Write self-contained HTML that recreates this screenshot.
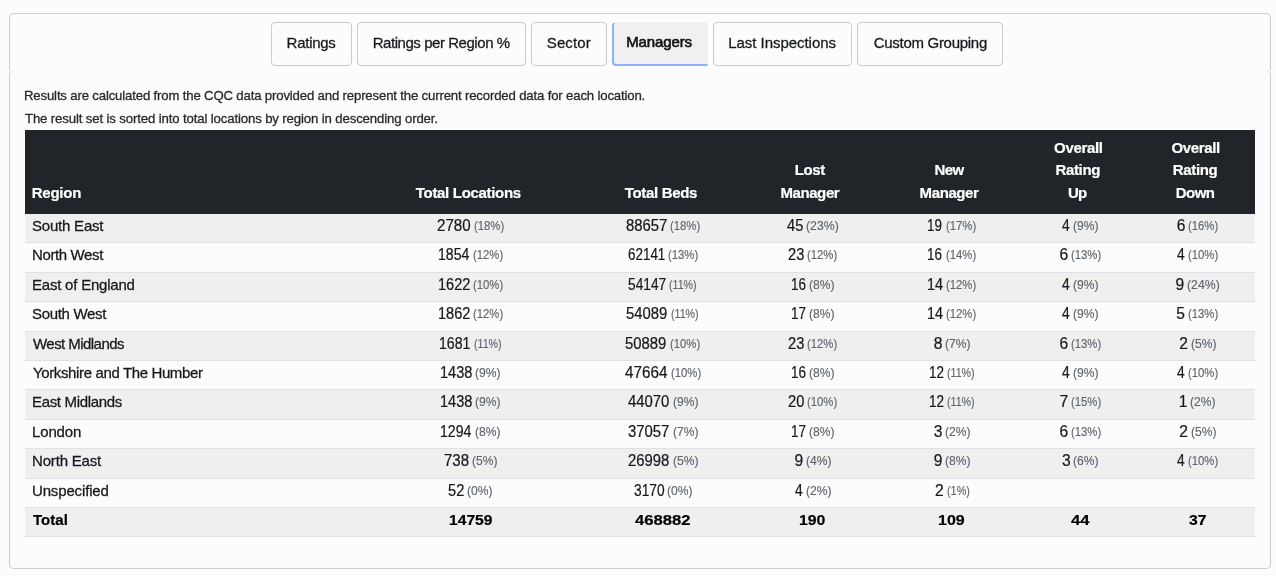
<!DOCTYPE html>
<html><head><meta charset="utf-8"><title>Managers</title>
<style>
html,body{margin:0;padding:0;}
body{width:1276px;height:576px;position:relative;overflow:hidden;background:#fcfcfc;font-family:"Liberation Sans",sans-serif;}
.t{position:absolute;white-space:nowrap;line-height:20px;transform-origin:0 0;}
.L{position:absolute;left:0;top:0;width:1276px;height:576px;will-change:transform;}
.b{font-weight:bold;}
.card{position:absolute;left:9px;top:13px;width:1260px;height:56px;border:1px solid #cbcbcb;border-bottom:0;border-radius:5px 5px 0 0;}
.pane{position:absolute;left:9px;top:70px;width:1260px;height:498px;background:#fcfcfc;border:1px solid #cbcbcb;border-top:0;border-radius:5px;}
.tab{position:absolute;top:22px;height:42px;border:1px solid #cbcbcb;border-radius:4px;background:#fcfcfc;box-sizing:content-box;}
.tab.on{background:#f0f0f0;border-color:transparent;border-radius:4px 4px 0 4px;border-left:2px solid #8cb4f5;border-bottom:2px solid #8cb4f5;height:41px;}
.hdr{position:absolute;left:25px;top:130px;width:1230px;height:84px;background:#212529;}
.row{position:absolute;left:25px;width:1230px;background:#efefef;}
.ln{position:absolute;left:25px;width:1230px;height:1px;background:#dee2e6;}
</style></head><body>
<div class="card"></div>
<div class="pane"></div>
<div class="tab" style="left:271px;width:79px;"></div>
<div class="tab" style="left:357px;width:167px;"></div>
<div class="tab" style="left:531px;width:74px;"></div>
<div class="tab on" style="left:612px;width:93px;"></div>
<div class="tab" style="left:713px;width:137px;"></div>
<div class="tab" style="left:857px;width:144px;"></div>
<div class="hdr"></div>
<div class="row" style="top:214px;height:28px"></div>
<div class="row" style="top:273px;height:28px"></div>
<div class="row" style="top:332px;height:28px"></div>
<div class="row" style="top:390px;height:29px"></div>
<div class="row" style="top:449px;height:29px"></div>
<div class="row" style="top:508px;height:28px"></div>
<div class="ln" style="top:242px"></div>
<div class="ln" style="top:272px"></div>
<div class="ln" style="top:301px"></div>
<div class="ln" style="top:331px"></div>
<div class="ln" style="top:360px"></div>
<div class="ln" style="top:389px"></div>
<div class="ln" style="top:419px"></div>
<div class="ln" style="top:448px"></div>
<div class="ln" style="top:478px"></div>
<div class="ln" style="top:507px"></div>
<div class="ln" style="top:536px"></div>
<div class="L">
<div class="t" style="left:286.60px;top:32.80px;font-size:15.0px;color:#16191c;letter-spacing:-0.267px;-webkit-text-stroke:0.28px #16191c;">Ratings</div>
<div class="t" style="left:372.70px;top:32.80px;font-size:15.0px;color:#16191c;letter-spacing:-0.447px;-webkit-text-stroke:0.28px #16191c;">Ratings per Region %</div>
<div class="t" style="left:546.80px;top:32.80px;font-size:15.0px;color:#16191c;letter-spacing:0.100px;-webkit-text-stroke:0.28px #16191c;">Sector</div>
<div class="t" style="left:626.20px;top:31.80px;font-size:15.0px;color:#111;letter-spacing:-0.114px;-webkit-text-stroke:0.6px #111;">Managers</div>
<div class="t" style="left:728.20px;top:32.80px;font-size:15.0px;color:#16191c;letter-spacing:-0.040px;-webkit-text-stroke:0.28px #16191c;">Last Inspections</div>
<div class="t" style="left:873.70px;top:32.80px;font-size:15.0px;color:#16191c;letter-spacing:-0.286px;-webkit-text-stroke:0.28px #16191c;">Custom Grouping</div>
<div class="t" style="left:24.00px;top:86.13px;font-size:13.2px;color:#282828;letter-spacing:-0.168px;-webkit-text-stroke:0.28px #282828;">Results are calculated from the CQC data provided and represent the current recorded data for each location.</div>
<div class="t" style="left:25.00px;top:109.13px;font-size:13.2px;color:#282828;letter-spacing:-0.133px;-webkit-text-stroke:0.28px #282828;">The result set is sorted into total locations by region in descending order.</div>
<div class="t b" style="left:31.70px;top:182.80px;font-size:15.0px;color:#fff;letter-spacing:-0.220px;-webkit-text-stroke:0.2px #fff;">Region</div>
<div class="t b" style="left:415.80px;top:182.80px;font-size:15.0px;color:#fff;letter-spacing:-0.314px;-webkit-text-stroke:0.2px #fff;">Total Locations</div>
<div class="t b" style="left:624.80px;top:182.80px;font-size:15.0px;color:#fff;letter-spacing:-0.333px;-webkit-text-stroke:0.2px #fff;">Total Beds</div>
<div class="t b" style="left:794.82px;top:159.80px;font-size:15.0px;color:#fff;letter-spacing:-0.413px;-webkit-text-stroke:0.2px #fff;">Lost</div>
<div class="t b" style="left:780.42px;top:182.80px;font-size:15.0px;color:#fff;letter-spacing:-0.407px;-webkit-text-stroke:0.2px #fff;">Manager</div>
<div class="t b" style="left:934.50px;top:159.80px;font-size:15.0px;color:#fff;letter-spacing:-0.600px;-webkit-text-stroke:0.2px #fff;">New</div>
<div class="t b" style="left:919.62px;top:182.80px;font-size:15.0px;color:#fff;letter-spacing:-0.407px;-webkit-text-stroke:0.2px #fff;">Manager</div>
<div class="t b" style="left:1054.10px;top:137.80px;font-size:15.0px;color:#fff;letter-spacing:-0.333px;-webkit-text-stroke:0.2px #fff;">Overall</div>
<div class="t b" style="left:1055.50px;top:159.80px;font-size:15.0px;color:#fff;letter-spacing:-0.360px;-webkit-text-stroke:0.2px #fff;">Rating</div>
<div class="t b" style="left:1067.98px;top:182.80px;font-size:15.0px;color:#fff;letter-spacing:-0.760px;-webkit-text-stroke:0.2px #fff;">Up</div>
<div class="t b" style="left:1171.40px;top:137.80px;font-size:15.0px;color:#fff;letter-spacing:-0.333px;-webkit-text-stroke:0.2px #fff;">Overall</div>
<div class="t b" style="left:1172.80px;top:159.80px;font-size:15.0px;color:#fff;letter-spacing:-0.360px;-webkit-text-stroke:0.2px #fff;">Rating</div>
<div class="t b" style="left:1175.68px;top:182.80px;font-size:15.0px;color:#fff;letter-spacing:-0.520px;-webkit-text-stroke:0.2px #fff;">Down</div>
<div class="t" style="left:32.00px;top:215.80px;font-size:15.0px;color:#16191c;letter-spacing:-0.211px;-webkit-text-stroke:0.28px #16191c;">South East</div>
<div class="t" style="left:32.00px;top:244.80px;font-size:15.0px;color:#16191c;letter-spacing:-0.378px;-webkit-text-stroke:0.28px #16191c;">North West</div>
<div class="t" style="left:32.00px;top:274.80px;font-size:15.0px;color:#16191c;letter-spacing:-0.214px;-webkit-text-stroke:0.28px #16191c;">East of England</div>
<div class="t" style="left:32.00px;top:303.80px;font-size:15.0px;color:#16191c;letter-spacing:-0.322px;-webkit-text-stroke:0.28px #16191c;">South West</div>
<div class="t" style="left:33.00px;top:333.80px;font-size:15.0px;color:#16191c;letter-spacing:-0.550px;-webkit-text-stroke:0.28px #16191c;">West Midlands</div>
<div class="t" style="left:33.00px;top:362.80px;font-size:15.0px;color:#16191c;letter-spacing:-0.370px;-webkit-text-stroke:0.28px #16191c;">Yorkshire and The Humber</div>
<div class="t" style="left:32.00px;top:391.80px;font-size:15.0px;color:#16191c;letter-spacing:-0.333px;-webkit-text-stroke:0.28px #16191c;">East Midlands</div>
<div class="t" style="left:32.00px;top:421.80px;font-size:15.0px;color:#16191c;letter-spacing:-0.140px;-webkit-text-stroke:0.28px #16191c;">London</div>
<div class="t" style="left:32.00px;top:450.80px;font-size:15.0px;color:#16191c;letter-spacing:-0.178px;-webkit-text-stroke:0.28px #16191c;">North East</div>
<div class="t" style="left:32.00px;top:480.80px;font-size:15.0px;color:#16191c;letter-spacing:-0.150px;-webkit-text-stroke:0.28px #16191c;">Unspecified</div>
<div class="t b" style="left:33.00px;top:509.80px;font-size:15.0px;color:#000;letter-spacing:0.050px;-webkit-text-stroke:0.2px #000;">Total</div>
<div class="t b" style="left:448.71px;top:509.80px;font-size:15.0px;color:#000;transform:scaleX(1.0425);-webkit-text-stroke:0.2px #000;">14759</div>
<div class="t b" style="left:635.05px;top:509.80px;font-size:15.0px;color:#000;transform:scaleX(1.1100);-webkit-text-stroke:0.2px #000;">468882</div>
<div class="t b" style="left:799.00px;top:509.80px;font-size:15.0px;color:#000;transform:scaleX(1.0542);-webkit-text-stroke:0.2px #000;">190</div>
<div class="t b" style="left:938.03px;top:509.80px;font-size:15.0px;color:#000;transform:scaleX(1.0667);-webkit-text-stroke:0.2px #000;">109</div>
<div class="t b" style="left:1070.65px;top:509.80px;font-size:15.0px;color:#000;transform:scaleX(1.1118);-webkit-text-stroke:0.2px #000;">44</div>
<div class="t b" style="left:1189.00px;top:509.80px;font-size:15.0px;color:#000;transform:scaleX(1.0500);-webkit-text-stroke:0.2px #000;">37</div>
<div class="t" style="left:437.38px;top:216.09px;font-size:15.6px;color:#16191c;transform:scaleX(0.9706);-webkit-text-stroke:0.22px #16191c;">2780</div>
<div class="t" style="left:473.82px;top:216.43px;font-size:13.2px;color:#5f656b;transform:scaleX(0.8574);-webkit-text-stroke:0.15px #5f656b;">(18%)</div>
<div class="t" style="left:625.57px;top:216.09px;font-size:15.6px;color:#16191c;transform:scaleX(0.9535);-webkit-text-stroke:0.22px #16191c;">88657</div>
<div class="t" style="left:670.02px;top:216.43px;font-size:13.2px;color:#5f656b;transform:scaleX(0.8574);-webkit-text-stroke:0.15px #5f656b;">(18%)</div>
<div class="t" style="left:786.73px;top:216.09px;font-size:15.6px;color:#16191c;transform:scaleX(0.9412);-webkit-text-stroke:0.22px #16191c;">45</div>
<div class="t" style="left:806.09px;top:216.43px;font-size:13.2px;color:#5f656b;transform:scaleX(0.9309);-webkit-text-stroke:0.15px #5f656b;">(23%)</div>
<div class="t" style="left:927.41px;top:216.09px;font-size:15.6px;color:#16191c;transform:scaleX(0.8625);-webkit-text-stroke:0.22px #16191c;">19</div>
<div class="t" style="left:945.52px;top:216.43px;font-size:13.2px;color:#5f656b;transform:scaleX(0.8574);-webkit-text-stroke:0.15px #5f656b;">(17%)</div>
<div class="t" style="left:1062.02px;top:216.09px;font-size:15.6px;color:#16191c;transform:scaleX(0.8889);-webkit-text-stroke:0.22px #16191c;">4</div>
<div class="t" style="left:1073.41px;top:216.43px;font-size:13.2px;color:#5f656b;transform:scaleX(0.9173);-webkit-text-stroke:0.15px #5f656b;">(9%)</div>
<div class="t" style="left:1176.68px;top:216.09px;font-size:15.6px;color:#16191c;-webkit-text-stroke:0.22px #16191c;">6</div>
<div class="t" style="left:1188.12px;top:216.43px;font-size:13.2px;color:#5f656b;transform:scaleX(0.8574);-webkit-text-stroke:0.15px #5f656b;">(16%)</div>
<div class="t" style="left:437.57px;top:245.09px;font-size:15.6px;color:#16191c;transform:scaleX(0.9059);-webkit-text-stroke:0.22px #16191c;">1854</div>
<div class="t" style="left:472.72px;top:245.43px;font-size:13.2px;color:#5f656b;transform:scaleX(0.8574);-webkit-text-stroke:0.15px #5f656b;">(12%)</div>
<div class="t" style="left:627.57px;top:245.09px;font-size:15.6px;color:#16191c;transform:scaleX(0.8605);-webkit-text-stroke:0.22px #16191c;">62141</div>
<div class="t" style="left:668.02px;top:245.43px;font-size:13.2px;color:#5f656b;transform:scaleX(0.8574);-webkit-text-stroke:0.15px #5f656b;">(13%)</div>
<div class="t" style="left:787.98px;top:245.09px;font-size:15.6px;color:#16191c;transform:scaleX(0.9412);-webkit-text-stroke:0.22px #16191c;">23</div>
<div class="t" style="left:807.42px;top:245.43px;font-size:13.2px;color:#5f656b;transform:scaleX(0.8574);-webkit-text-stroke:0.15px #5f656b;">(12%)</div>
<div class="t" style="left:927.41px;top:245.09px;font-size:15.6px;color:#16191c;transform:scaleX(0.8625);-webkit-text-stroke:0.22px #16191c;">16</div>
<div class="t" style="left:945.52px;top:245.43px;font-size:13.2px;color:#5f656b;transform:scaleX(0.8574);-webkit-text-stroke:0.15px #5f656b;">(14%)</div>
<div class="t" style="left:1059.38px;top:245.09px;font-size:15.6px;color:#16191c;-webkit-text-stroke:0.22px #16191c;">6</div>
<div class="t" style="left:1070.82px;top:245.43px;font-size:13.2px;color:#5f656b;transform:scaleX(0.8574);-webkit-text-stroke:0.15px #5f656b;">(13%)</div>
<div class="t" style="left:1176.68px;top:245.09px;font-size:15.6px;color:#16191c;transform:scaleX(0.8889);-webkit-text-stroke:0.22px #16191c;">4</div>
<div class="t" style="left:1188.12px;top:245.43px;font-size:13.2px;color:#5f656b;transform:scaleX(0.8574);-webkit-text-stroke:0.15px #5f656b;">(10%)</div>
<div class="t" style="left:437.54px;top:275.09px;font-size:15.6px;color:#16191c;transform:scaleX(0.9333);-webkit-text-stroke:0.22px #16191c;">1622</div>
<div class="t" style="left:472.72px;top:275.43px;font-size:13.2px;color:#5f656b;transform:scaleX(0.8574);-webkit-text-stroke:0.15px #5f656b;">(10%)</div>
<div class="t" style="left:627.94px;top:275.09px;font-size:15.6px;color:#16191c;transform:scaleX(0.8810);-webkit-text-stroke:0.22px #16191c;">54147</div>
<div class="t" style="left:669.32px;top:275.43px;font-size:13.2px;color:#5f656b;transform:scaleX(0.8076);-webkit-text-stroke:0.15px #5f656b;">(11%)</div>
<div class="t" style="left:790.86px;top:275.09px;font-size:15.6px;color:#16191c;transform:scaleX(0.8625);-webkit-text-stroke:0.22px #16191c;">16</div>
<div class="t" style="left:808.91px;top:275.43px;font-size:13.2px;color:#5f656b;transform:scaleX(0.9173);-webkit-text-stroke:0.15px #5f656b;">(8%)</div>
<div class="t" style="left:926.85px;top:275.09px;font-size:15.6px;color:#16191c;transform:scaleX(0.9250);-webkit-text-stroke:0.22px #16191c;">14</div>
<div class="t" style="left:946.02px;top:275.43px;font-size:13.2px;color:#5f656b;transform:scaleX(0.8574);-webkit-text-stroke:0.15px #5f656b;">(12%)</div>
<div class="t" style="left:1062.02px;top:275.09px;font-size:15.6px;color:#16191c;transform:scaleX(0.8889);-webkit-text-stroke:0.22px #16191c;">4</div>
<div class="t" style="left:1073.41px;top:275.43px;font-size:13.2px;color:#5f656b;transform:scaleX(0.9173);-webkit-text-stroke:0.15px #5f656b;">(9%)</div>
<div class="t" style="left:1175.43px;top:275.09px;font-size:15.6px;color:#16191c;-webkit-text-stroke:0.22px #16191c;">9</div>
<div class="t" style="left:1186.79px;top:275.43px;font-size:13.2px;color:#5f656b;transform:scaleX(0.9309);-webkit-text-stroke:0.15px #5f656b;">(24%)</div>
<div class="t" style="left:437.54px;top:304.09px;font-size:15.6px;color:#16191c;transform:scaleX(0.9333);-webkit-text-stroke:0.22px #16191c;">1862</div>
<div class="t" style="left:472.72px;top:304.43px;font-size:13.2px;color:#5f656b;transform:scaleX(0.8574);-webkit-text-stroke:0.15px #5f656b;">(12%)</div>
<div class="t" style="left:626.37px;top:304.09px;font-size:15.6px;color:#16191c;transform:scaleX(0.9524);-webkit-text-stroke:0.22px #16191c;">54089</div>
<div class="t" style="left:670.82px;top:304.43px;font-size:13.2px;color:#5f656b;transform:scaleX(0.8076);-webkit-text-stroke:0.15px #5f656b;">(11%)</div>
<div class="t" style="left:790.86px;top:304.09px;font-size:15.6px;color:#16191c;transform:scaleX(0.8625);-webkit-text-stroke:0.22px #16191c;">17</div>
<div class="t" style="left:808.91px;top:304.43px;font-size:13.2px;color:#5f656b;transform:scaleX(0.9173);-webkit-text-stroke:0.15px #5f656b;">(8%)</div>
<div class="t" style="left:926.85px;top:304.09px;font-size:15.6px;color:#16191c;transform:scaleX(0.9250);-webkit-text-stroke:0.22px #16191c;">14</div>
<div class="t" style="left:946.02px;top:304.43px;font-size:13.2px;color:#5f656b;transform:scaleX(0.8574);-webkit-text-stroke:0.15px #5f656b;">(12%)</div>
<div class="t" style="left:1062.02px;top:304.09px;font-size:15.6px;color:#16191c;transform:scaleX(0.8889);-webkit-text-stroke:0.22px #16191c;">4</div>
<div class="t" style="left:1073.41px;top:304.43px;font-size:13.2px;color:#5f656b;transform:scaleX(0.9173);-webkit-text-stroke:0.15px #5f656b;">(9%)</div>
<div class="t" style="left:1176.18px;top:304.09px;font-size:15.6px;color:#16191c;-webkit-text-stroke:0.22px #16191c;">5</div>
<div class="t" style="left:1187.62px;top:304.43px;font-size:13.2px;color:#5f656b;transform:scaleX(0.8574);-webkit-text-stroke:0.15px #5f656b;">(13%)</div>
<div class="t" style="left:439.32px;top:334.09px;font-size:15.6px;color:#16191c;transform:scaleX(0.9030);-webkit-text-stroke:0.22px #16191c;">1681</div>
<div class="t" style="left:473.52px;top:334.43px;font-size:13.2px;color:#5f656b;transform:scaleX(0.8076);-webkit-text-stroke:0.15px #5f656b;">(11%)</div>
<div class="t" style="left:625.12px;top:334.09px;font-size:15.6px;color:#16191c;transform:scaleX(0.9524);-webkit-text-stroke:0.22px #16191c;">50889</div>
<div class="t" style="left:669.52px;top:334.43px;font-size:13.2px;color:#5f656b;transform:scaleX(0.8574);-webkit-text-stroke:0.15px #5f656b;">(10%)</div>
<div class="t" style="left:787.98px;top:334.09px;font-size:15.6px;color:#16191c;transform:scaleX(0.9412);-webkit-text-stroke:0.22px #16191c;">23</div>
<div class="t" style="left:807.42px;top:334.43px;font-size:13.2px;color:#5f656b;transform:scaleX(0.8574);-webkit-text-stroke:0.15px #5f656b;">(12%)</div>
<div class="t" style="left:933.82px;top:334.09px;font-size:15.6px;color:#16191c;-webkit-text-stroke:0.22px #16191c;">8</div>
<div class="t" style="left:945.21px;top:334.43px;font-size:13.2px;color:#5f656b;transform:scaleX(0.9173);-webkit-text-stroke:0.15px #5f656b;">(7%)</div>
<div class="t" style="left:1059.38px;top:334.09px;font-size:15.6px;color:#16191c;-webkit-text-stroke:0.22px #16191c;">6</div>
<div class="t" style="left:1070.82px;top:334.43px;font-size:13.2px;color:#5f656b;transform:scaleX(0.8574);-webkit-text-stroke:0.15px #5f656b;">(13%)</div>
<div class="t" style="left:1179.33px;top:334.09px;font-size:15.6px;color:#16191c;-webkit-text-stroke:0.22px #16191c;">2</div>
<div class="t" style="left:1190.71px;top:334.43px;font-size:13.2px;color:#5f656b;transform:scaleX(0.9173);-webkit-text-stroke:0.15px #5f656b;">(5%)</div>
<div class="t" style="left:440.19px;top:363.09px;font-size:15.6px;color:#16191c;transform:scaleX(0.9333);-webkit-text-stroke:0.22px #16191c;">1438</div>
<div class="t" style="left:475.31px;top:363.43px;font-size:13.2px;color:#5f656b;transform:scaleX(0.9173);-webkit-text-stroke:0.15px #5f656b;">(9%)</div>
<div class="t" style="left:625.07px;top:363.09px;font-size:15.6px;color:#16191c;transform:scaleX(0.9767);-webkit-text-stroke:0.22px #16191c;">47664</div>
<div class="t" style="left:670.52px;top:363.43px;font-size:13.2px;color:#5f656b;transform:scaleX(0.8574);-webkit-text-stroke:0.15px #5f656b;">(10%)</div>
<div class="t" style="left:790.86px;top:363.09px;font-size:15.6px;color:#16191c;transform:scaleX(0.8625);-webkit-text-stroke:0.22px #16191c;">16</div>
<div class="t" style="left:808.91px;top:363.43px;font-size:13.2px;color:#5f656b;transform:scaleX(0.9173);-webkit-text-stroke:0.15px #5f656b;">(8%)</div>
<div class="t" style="left:928.66px;top:363.09px;font-size:15.6px;color:#16191c;transform:scaleX(0.8625);-webkit-text-stroke:0.22px #16191c;">12</div>
<div class="t" style="left:946.82px;top:363.43px;font-size:13.2px;color:#5f656b;transform:scaleX(0.8076);-webkit-text-stroke:0.15px #5f656b;">(11%)</div>
<div class="t" style="left:1062.02px;top:363.09px;font-size:15.6px;color:#16191c;transform:scaleX(0.8889);-webkit-text-stroke:0.22px #16191c;">4</div>
<div class="t" style="left:1073.41px;top:363.43px;font-size:13.2px;color:#5f656b;transform:scaleX(0.9173);-webkit-text-stroke:0.15px #5f656b;">(9%)</div>
<div class="t" style="left:1176.68px;top:363.09px;font-size:15.6px;color:#16191c;transform:scaleX(0.8889);-webkit-text-stroke:0.22px #16191c;">4</div>
<div class="t" style="left:1188.12px;top:363.43px;font-size:13.2px;color:#5f656b;transform:scaleX(0.8574);-webkit-text-stroke:0.15px #5f656b;">(10%)</div>
<div class="t" style="left:440.19px;top:392.09px;font-size:15.6px;color:#16191c;transform:scaleX(0.9333);-webkit-text-stroke:0.22px #16191c;">1438</div>
<div class="t" style="left:475.31px;top:392.43px;font-size:13.2px;color:#5f656b;transform:scaleX(0.9173);-webkit-text-stroke:0.15px #5f656b;">(9%)</div>
<div class="t" style="left:628.22px;top:392.09px;font-size:15.6px;color:#16191c;transform:scaleX(0.9535);-webkit-text-stroke:0.22px #16191c;">44070</div>
<div class="t" style="left:672.61px;top:392.43px;font-size:13.2px;color:#5f656b;transform:scaleX(0.9173);-webkit-text-stroke:0.15px #5f656b;">(9%)</div>
<div class="t" style="left:787.98px;top:392.09px;font-size:15.6px;color:#16191c;transform:scaleX(0.9412);-webkit-text-stroke:0.22px #16191c;">20</div>
<div class="t" style="left:807.42px;top:392.43px;font-size:13.2px;color:#5f656b;transform:scaleX(0.8574);-webkit-text-stroke:0.15px #5f656b;">(10%)</div>
<div class="t" style="left:928.66px;top:392.09px;font-size:15.6px;color:#16191c;transform:scaleX(0.8625);-webkit-text-stroke:0.22px #16191c;">12</div>
<div class="t" style="left:946.82px;top:392.43px;font-size:13.2px;color:#5f656b;transform:scaleX(0.8076);-webkit-text-stroke:0.15px #5f656b;">(11%)</div>
<div class="t" style="left:1059.38px;top:392.09px;font-size:15.6px;color:#16191c;-webkit-text-stroke:0.22px #16191c;">7</div>
<div class="t" style="left:1070.82px;top:392.43px;font-size:13.2px;color:#5f656b;transform:scaleX(0.8574);-webkit-text-stroke:0.15px #5f656b;">(15%)</div>
<div class="t" style="left:1178.83px;top:392.09px;font-size:15.6px;color:#16191c;-webkit-text-stroke:0.22px #16191c;">1</div>
<div class="t" style="left:1190.21px;top:392.43px;font-size:13.2px;color:#5f656b;transform:scaleX(0.9173);-webkit-text-stroke:0.15px #5f656b;">(2%)</div>
<div class="t" style="left:440.22px;top:422.09px;font-size:15.6px;color:#16191c;transform:scaleX(0.9059);-webkit-text-stroke:0.22px #16191c;">1294</div>
<div class="t" style="left:475.31px;top:422.43px;font-size:13.2px;color:#5f656b;transform:scaleX(0.9173);-webkit-text-stroke:0.15px #5f656b;">(8%)</div>
<div class="t" style="left:628.22px;top:422.09px;font-size:15.6px;color:#16191c;transform:scaleX(0.9535);-webkit-text-stroke:0.22px #16191c;">37057</div>
<div class="t" style="left:672.61px;top:422.43px;font-size:13.2px;color:#5f656b;transform:scaleX(0.9173);-webkit-text-stroke:0.15px #5f656b;">(7%)</div>
<div class="t" style="left:790.86px;top:422.09px;font-size:15.6px;color:#16191c;transform:scaleX(0.8625);-webkit-text-stroke:0.22px #16191c;">17</div>
<div class="t" style="left:808.91px;top:422.43px;font-size:13.2px;color:#5f656b;transform:scaleX(0.9173);-webkit-text-stroke:0.15px #5f656b;">(8%)</div>
<div class="t" style="left:933.82px;top:422.09px;font-size:15.6px;color:#16191c;-webkit-text-stroke:0.22px #16191c;">3</div>
<div class="t" style="left:945.21px;top:422.43px;font-size:13.2px;color:#5f656b;transform:scaleX(0.9173);-webkit-text-stroke:0.15px #5f656b;">(2%)</div>
<div class="t" style="left:1059.38px;top:422.09px;font-size:15.6px;color:#16191c;-webkit-text-stroke:0.22px #16191c;">6</div>
<div class="t" style="left:1070.82px;top:422.43px;font-size:13.2px;color:#5f656b;transform:scaleX(0.8574);-webkit-text-stroke:0.15px #5f656b;">(13%)</div>
<div class="t" style="left:1179.33px;top:422.09px;font-size:15.6px;color:#16191c;-webkit-text-stroke:0.22px #16191c;">2</div>
<div class="t" style="left:1190.71px;top:422.43px;font-size:13.2px;color:#5f656b;transform:scaleX(0.9173);-webkit-text-stroke:0.15px #5f656b;">(5%)</div>
<div class="t" style="left:444.03px;top:451.09px;font-size:15.6px;color:#16191c;transform:scaleX(0.9615);-webkit-text-stroke:0.22px #16191c;">738</div>
<div class="t" style="left:472.41px;top:451.43px;font-size:13.2px;color:#5f656b;transform:scaleX(0.9173);-webkit-text-stroke:0.15px #5f656b;">(5%)</div>
<div class="t" style="left:628.22px;top:451.09px;font-size:15.6px;color:#16191c;transform:scaleX(0.9535);-webkit-text-stroke:0.22px #16191c;">26998</div>
<div class="t" style="left:672.61px;top:451.43px;font-size:13.2px;color:#5f656b;transform:scaleX(0.9173);-webkit-text-stroke:0.15px #5f656b;">(5%)</div>
<div class="t" style="left:794.62px;top:451.09px;font-size:15.6px;color:#16191c;-webkit-text-stroke:0.22px #16191c;">9</div>
<div class="t" style="left:806.01px;top:451.43px;font-size:13.2px;color:#5f656b;transform:scaleX(0.9173);-webkit-text-stroke:0.15px #5f656b;">(4%)</div>
<div class="t" style="left:933.82px;top:451.09px;font-size:15.6px;color:#16191c;-webkit-text-stroke:0.22px #16191c;">9</div>
<div class="t" style="left:945.21px;top:451.43px;font-size:13.2px;color:#5f656b;transform:scaleX(0.9173);-webkit-text-stroke:0.15px #5f656b;">(8%)</div>
<div class="t" style="left:1062.02px;top:451.09px;font-size:15.6px;color:#16191c;-webkit-text-stroke:0.22px #16191c;">3</div>
<div class="t" style="left:1073.41px;top:451.43px;font-size:13.2px;color:#5f656b;transform:scaleX(0.9173);-webkit-text-stroke:0.15px #5f656b;">(6%)</div>
<div class="t" style="left:1176.68px;top:451.09px;font-size:15.6px;color:#16191c;transform:scaleX(0.8889);-webkit-text-stroke:0.22px #16191c;">4</div>
<div class="t" style="left:1188.12px;top:451.43px;font-size:13.2px;color:#5f656b;transform:scaleX(0.8574);-webkit-text-stroke:0.15px #5f656b;">(10%)</div>
<div class="t" style="left:448.09px;top:481.09px;font-size:15.6px;color:#16191c;transform:scaleX(0.9375);-webkit-text-stroke:0.22px #16191c;">52</div>
<div class="t" style="left:467.41px;top:481.43px;font-size:13.2px;color:#5f656b;transform:scaleX(0.9173);-webkit-text-stroke:0.15px #5f656b;">(0%)</div>
<div class="t" style="left:633.72px;top:481.09px;font-size:15.6px;color:#16191c;transform:scaleX(0.8824);-webkit-text-stroke:0.22px #16191c;">3170</div>
<div class="t" style="left:667.11px;top:481.43px;font-size:13.2px;color:#5f656b;transform:scaleX(0.9173);-webkit-text-stroke:0.15px #5f656b;">(0%)</div>
<div class="t" style="left:794.62px;top:481.09px;font-size:15.6px;color:#16191c;transform:scaleX(0.8889);-webkit-text-stroke:0.22px #16191c;">4</div>
<div class="t" style="left:806.01px;top:481.43px;font-size:13.2px;color:#5f656b;transform:scaleX(0.9173);-webkit-text-stroke:0.15px #5f656b;">(2%)</div>
<div class="t" style="left:935.07px;top:481.09px;font-size:15.6px;color:#16191c;-webkit-text-stroke:0.22px #16191c;">2</div>
<div class="t" style="left:946.55px;top:481.43px;font-size:13.2px;color:#5f656b;transform:scaleX(0.8212);-webkit-text-stroke:0.15px #5f656b;">(1%)</div>
</div>
</body></html>
